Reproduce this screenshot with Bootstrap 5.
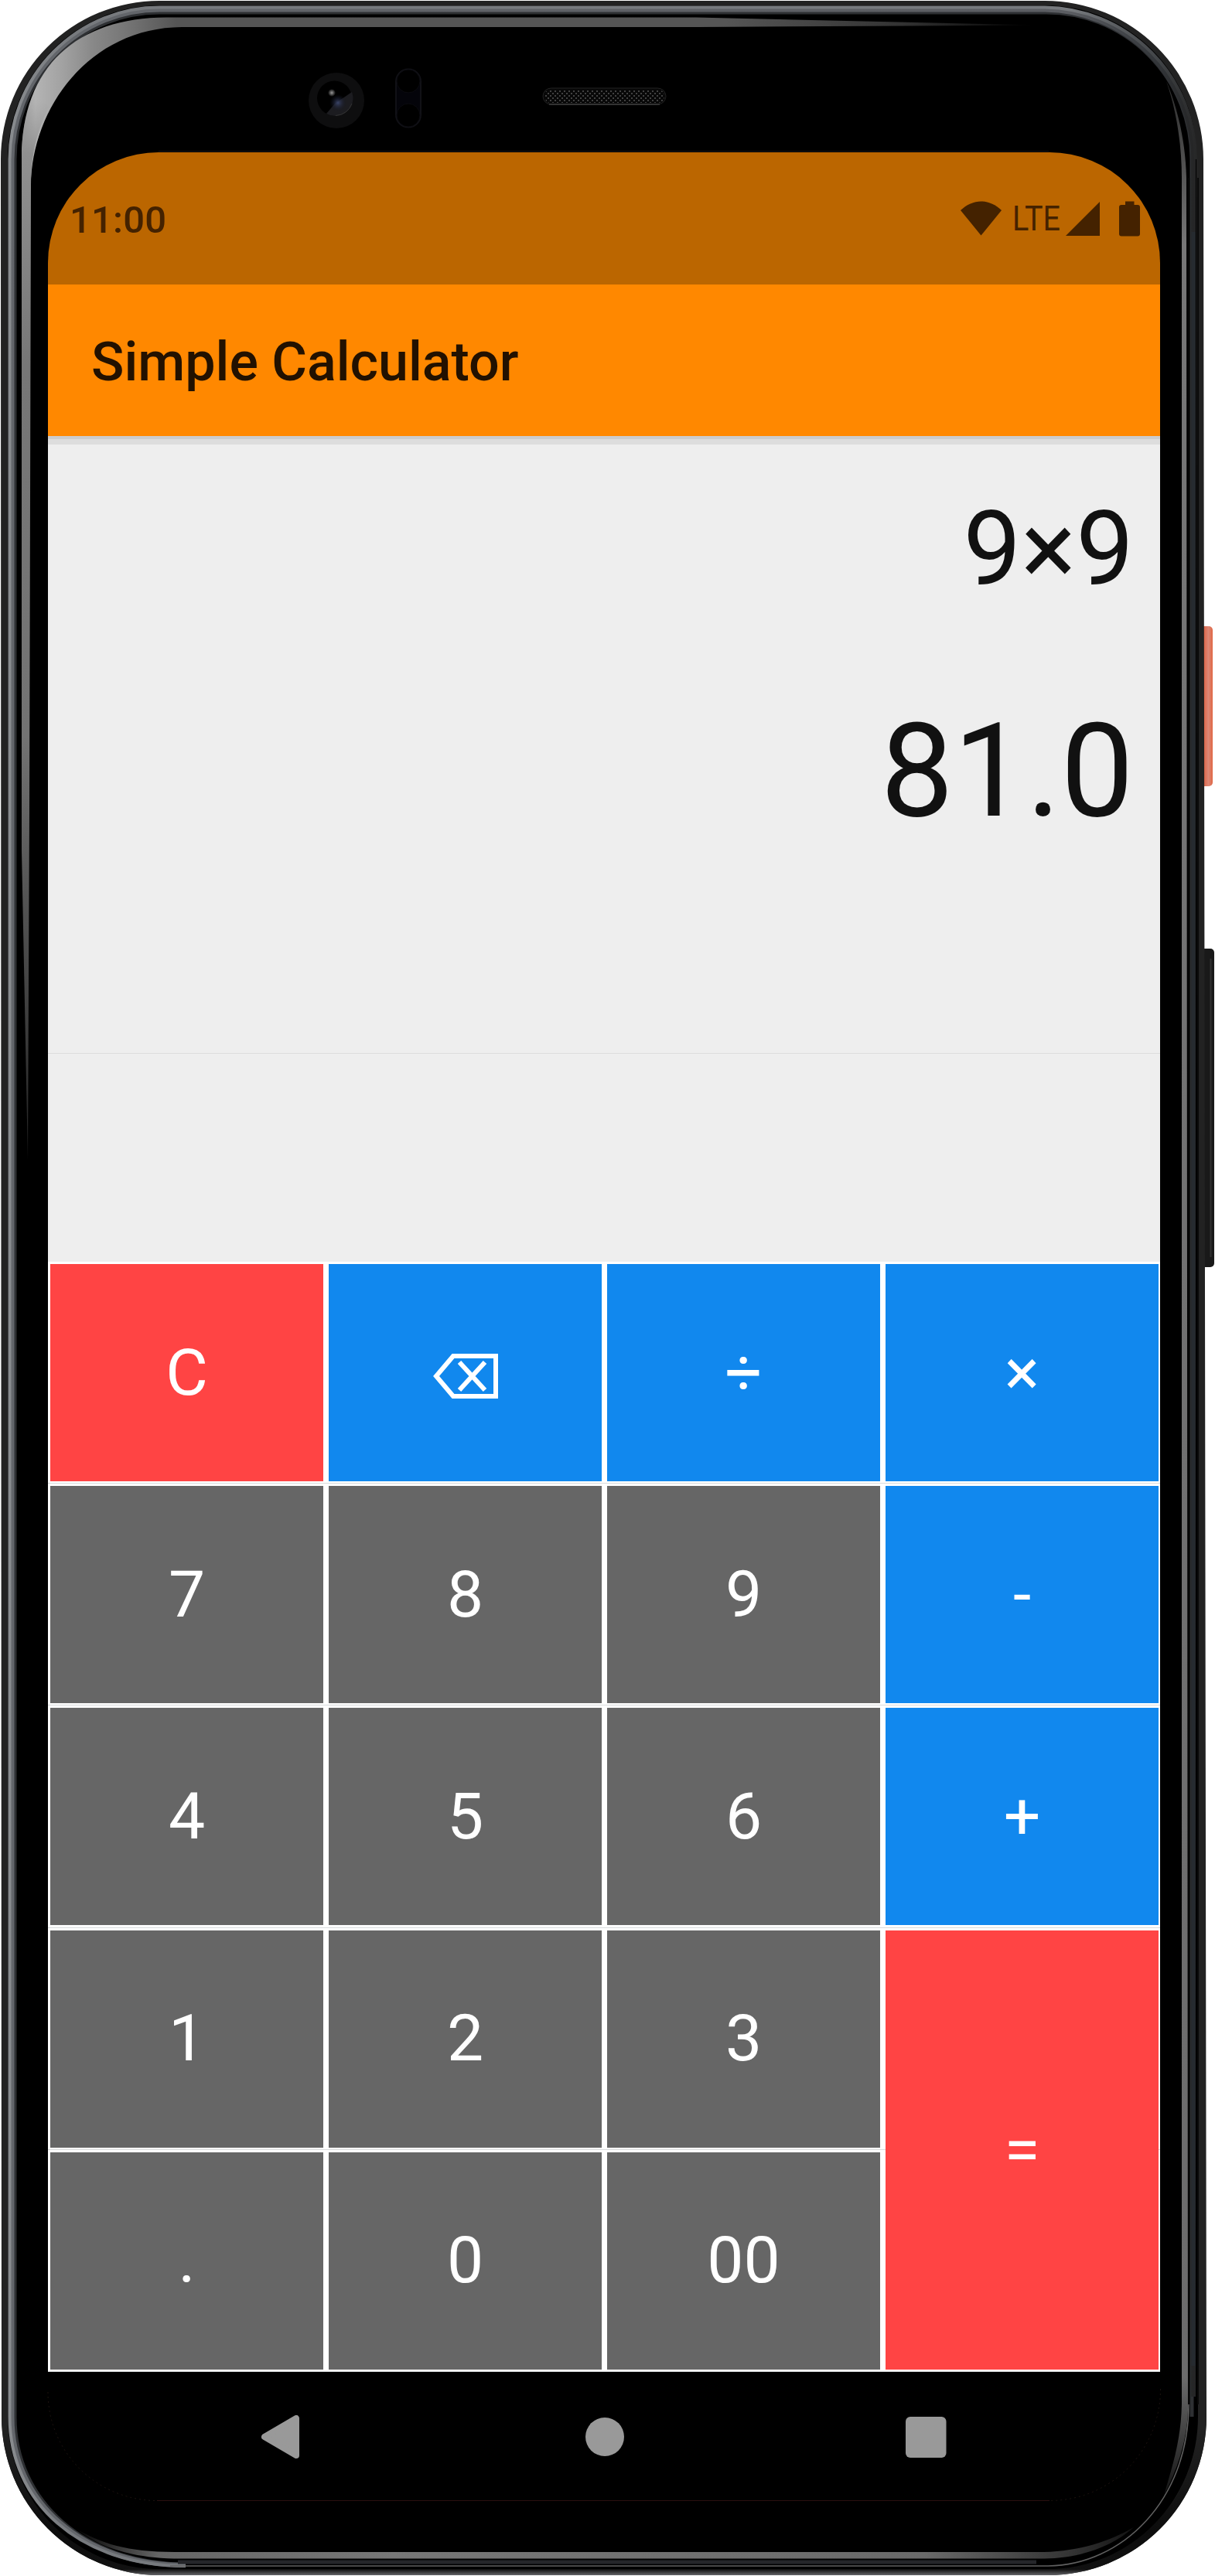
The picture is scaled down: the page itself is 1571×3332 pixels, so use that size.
<!DOCTYPE html>
<html lang="en">
<head>
<meta charset="utf-8">
<meta name="viewport" content="width=device-width, initial-scale=1">
<title>Simple Calculator</title>
<link href="https://cdn.jsdelivr.net/npm/bootstrap@5.3.0/dist/css/bootstrap.min.css" rel="stylesheet">
<style>
  body { font-family: Roboto, "Noto Sans", sans-serif; background: #fff; }
  .phone { width: 1571px; height: 3332px; padding: 197px 71px 0 62px; }
  .phone-body { width: 1571px; height: 3332px; }
  .screen { width: 1438px; height: 3039px; border-radius: 143px 143px 0 0; }
  .status-bar { height: 171px; background: #bb6600; color: #442200; padding: 0 25px 0 28px; }
  .clock { font-size: 49px; font-weight: 500; line-height: 57px; letter-spacing: .2px; padding-top: 3px; }
  .app-bar { height: 196px; background: #ff8800; padding: 3px 0 0 56px; z-index: 1;
    box-shadow: 0 4px 0 #ccc, 0 11px 0 #ddd; }
  .app-title { font-size: 70px; font-weight: 500; color: #221100; line-height: 82px; }
  .display { height: 1068px; background: #eee; color: #111; }
  .history { height: 799px; padding: 69px 34px 0 0; border-bottom: 1px solid #ddd; }
  .expression { font-size: 133px; line-height: 156px; }
  .result { font-size: 168px; line-height: 197px; margin-top: 110px; }
  .keypad { width: 1440px; height: 1436px; padding: 3px; gap: 6.2px 7px;
    grid-template-columns: repeat(4, 353px); grid-template-rows: repeat(5, 281px);
    background: repeating-linear-gradient(#fff 0 286.2px, #d8dbdc 286.2px 287.2px); }
  .key { font-size: 84px; line-height: 98px; color: #fff; background: #666; }
  .key-red { background: #ff4444; }
  .key-blue { background: #1188ee; }
  .key-tall { grid-row: span 2; }
  .nav-keys { height: 168px; padding: 0 276.5px 0 276px; }
</style>
<script src="https://cdn.jsdelivr.net/npm/bootstrap@5.3.0/dist/js/bootstrap.bundle.min.js"></script>
</head>
<body>
<main class="phone position-relative overflow-hidden">
  <svg class="phone-body position-absolute top-0 start-0" viewBox="0 0 1571 3332" fill="none" aria-hidden="true">
    <defs>
      <linearGradient id="rimA" gradientUnits="userSpaceOnUse" x1="0" y1="0" x2="1571" y2="0">
        <stop offset="0" stop-color="#8b8e91"/><stop offset=".06" stop-color="#777a7e"/><stop offset=".88" stop-color="#777a7e"/><stop offset=".95" stop-color="#44474a"/><stop offset=".99" stop-color="#222"/>
      </linearGradient>
      <linearGradient id="rimB" gradientUnits="userSpaceOnUse" x1="0" y1="0" x2="1571" y2="0">
        <stop offset="0" stop-color="#63666b"/><stop offset=".88" stop-color="#5b5d62"/><stop offset=".95" stop-color="#34373b"/><stop offset=".99" stop-color="#222"/>
      </linearGradient>
      <linearGradient id="glow" gradientUnits="userSpaceOnUse" x1="0" y1="0" x2="1340" y2="0">
        <stop offset=".02" stop-color="#999"/><stop offset=".034" stop-color="#b4b4b4"/><stop offset=".06" stop-color="#a2a2a2"/><stop offset=".09" stop-color="#888"/><stop offset=".12" stop-color="#777"/><stop offset=".17" stop-color="#555"/><stop offset=".7" stop-color="#555"/><stop offset=".87" stop-color="#333"/><stop offset="1" stop-color="#000"/>
      </linearGradient>
      <linearGradient id="glowLeft" gradientUnits="userSpaceOnUse" x1="0" y1="130" x2="0" y2="1500">
        <stop offset="0" stop-color="#999" stop-opacity="0"/><stop offset=".05" stop-color="#909090"/><stop offset=".25" stop-color="#777"/><stop offset=".6" stop-color="#737373"/><stop offset="1" stop-color="#222"/>
      </linearGradient>
      <linearGradient id="edge" gradientUnits="userSpaceOnUse" x1="0" y1="3140" x2="0" y2="3331">
        <stop offset="0" stop-color="#222"/><stop offset=".7" stop-color="#0c0c0c"/><stop offset=".96" stop-color="#111"/><stop offset="1" stop-color="#66666a"/>
      </linearGradient>
      <linearGradient id="stripe" gradientUnits="userSpaceOnUse" x1="0" y1="130" x2="0" y2="3230">
        <stop offset="0" stop-color="#333"/><stop offset=".06" stop-color="#777"/><stop offset=".95" stop-color="#6c6c6c"/><stop offset="1" stop-color="#111"/>
      </linearGradient>
      <linearGradient id="chin" gradientUnits="userSpaceOnUse" x1="95" y1="0" x2="1470" y2="0">
        <stop offset="0" stop-color="#000"/><stop offset=".08" stop-color="#666"/><stop offset=".3" stop-color="#777"/><stop offset=".8" stop-color="#6a6a6a"/><stop offset=".94" stop-color="#333"/><stop offset="1" stop-color="#111"/>
      </linearGradient>
      <linearGradient id="power" x1="0" x2="1"><stop offset="0" stop-color="#dd5533"/><stop offset=".3" stop-color="#dd5f3f"/><stop offset=".7" stop-color="#dd8877"/><stop offset="1" stop-color="#e06644"/></linearGradient>
      <radialGradient id="spark"><stop offset="0" stop-color="#999"/><stop offset="1" stop-color="#000"/></radialGradient>
      <radialGradient id="flare"><stop offset="0" stop-color="#3a4468"/><stop offset="1" stop-color="#111422" stop-opacity="0"/></radialGradient>
      <pattern id="mesh" width="6" height="6" patternUnits="userSpaceOnUse"><path d="M0 1h2M3 4h2" stroke="#555" stroke-width="1.6"/></pattern>
    </defs>
    <!-- side buttons -->
    <rect x="1550" y="810" width="18" height="207" rx="5" fill="url(#power)"/>
    <rect x="1550" y="1227" width="20" height="412" rx="5" fill="#191919"/>
    <path d="M1565.500 1240V1626" stroke="#303030" stroke-width="2"/>
    <!-- shell -->
    <path d="M206 1H1351A205 205 0 0 1 1556 206L1560 3126A205 205 0 0 1 1355 3331H206A205 205 0 0 1 2 3126L1 206A205 205 0 0 1 206 1Z" fill="#222"/>
    <path d="M1560 3126A205 205 0 0 1 1355 3331H206A205 205 0 0 1 2 3126H14A200 193 0 0 0 206 3322H1355A194 194 0 0 0 1549 3126Z" fill="url(#edge)"/>
    <path d="M206 7H1351A196 196 0 0 1 1547 206L1549 3126A194 197 0 0 1 1355 3323H206A196 197 0 0 1 10 3126V206A196 199 0 0 1 206 7Z" fill="#000"/>
    <!-- metal rim, light to dark towards the glass -->
    <path d="M240 3317C110 3317 19 3235 19 3126V206A187 190 0 0 1 206 16H1351A188 190 0 0 1 1541 206V3126" stroke="#2e3033" stroke-width="5"/>
    <path d="M240 3318C106 3318 15 3235 15.500 3126V206A190.500 194 0 0 1 206 12.500H1351A194 194 0 0 1 1543 206V3100" stroke="url(#rimB)" stroke-width="6"/>
    <path d="M240 3319C102 3319 12.500 3236 12.500 3126V206A193.500 197 0 0 1 206 9.500H1351A197 197 0 0 1 1546 206" stroke="url(#rimA)" stroke-width="4"/>
    <path d="M220 3319H1355C1450 3318 1537 3235 1537 3110" stroke="#606060" stroke-width="1.5"/>
    <path d="M230 3314H1340" stroke="#25262a" stroke-width="5"/>
    <path d="M1537.500 230V3110M1549 230V3110" stroke="#090909" stroke-width="2"/>
    <path d="M1543 300V3060" stroke="#262b30" stroke-width="5"/>
    <!-- reflections on the glass edge -->
    <path d="M28 205C28 85 100 23 215 22.500H900L1340 32.500L1171 33.500L900 35H235C115 36 41 140 40 240Z" fill="url(#glow)"/>
    <path d="M28 1100V205C28 173 33 145 43 118L63 138C48 170 40 200 40 240L38 1050L36 1500Z" fill="url(#glowLeft)"/>
    <path d="M1508 105C1522 145 1528 190 1528 230V3110C1527 3160 1514 3195 1505 3228C1524 3190 1535 3155 1536 3117L1534 230C1533 185 1523 140 1508 105Z" fill="url(#stripe)"/>
    <path d="M97 3270C130 3290 165 3301 225 3301H1350C1395 3300 1435 3287 1466 3269C1437 3295 1395 3309 1350 3309.500H225C165 3308 125 3293 97 3270Z" fill="url(#chin)"/>
    <!-- lower edge of the panel -->
    <path d="M203 3234.500H1357" stroke="#2a1010"/>
    <path d="M62 3094A141 140 0 0 0 203 3234.500M1500.500 3090A143 144 0 0 1 1357 3234.500" stroke="#1d1410" stroke-dasharray="2 4"/>
    <path d="M205 195.500H1356" stroke="#16161a"/>
    <!-- front camera -->
    <circle cx="435" cy="130" r="36" fill="#0e0e0f"/>
    <circle cx="432.500" cy="127" r="22.500" fill="#000"/>
    <path d="M455 119A23 23 0 0 1 422 147L433 134Z" fill="#1c1c20"/>
    <circle cx="437" cy="133" r="11" fill="url(#flare)"/>
    <circle cx="429" cy="120" r="5" fill="url(#spark)"/>
    <path d="M455 134A23 23 0 0 1 434 149.500" stroke="#333"/>
    <!-- proximity sensors -->
    <rect x="512" y="89.500" width="32" height="75" rx="16" fill="#04040a" stroke="#111116" stroke-width="2"/>
    <circle cx="528" cy="105" r="15" fill="#000" stroke="#0b0b10"/><circle cx="528" cy="149" r="15" fill="#000" stroke="#0b0b10"/>
    <!-- earpiece -->
    <rect x="702" y="114" width="159" height="21" rx="10.500" fill="#080808" stroke="#222"/>
    <rect x="704" y="116" width="155" height="17" rx="8" fill="url(#mesh)"/>
    <path d="M710 135H853" stroke="#555"/>
  </svg>

  <div class="screen position-relative d-flex flex-column overflow-hidden">
    <div class="status-bar d-flex align-items-center justify-content-between">
      <span class="clock">11:00</span>
      <svg width="234" height="60" viewBox="1241 252 234 60" fill="#442200" aria-label="Wi-Fi, LTE, battery full">
        <path d="M1242 271C1258 255.500 1279 255.500 1295 271L1268.500 303.500Z"/>
        <text x="1309" y="297" font-size="43.500" textLength="62" lengthAdjust="spacingAndGlyphs">LTE</text>
        <path d="M1422 260V304H1378Z"/>
        <path d="M1455 259.500H1466.500V264H1471Q1474 264 1474 267V301.500Q1474 304.500 1471 304.500H1450Q1447 304.500 1447 301.500V267Q1447 264 1450 264H1455Z"/>
      </svg>
    </div>
    <header class="app-bar d-flex align-items-center position-relative">
      <h1 class="app-title m-0">Simple Calculator</h1>
    </header>
    <section class="display">
      <div class="history d-flex flex-column align-items-end">
        <div class="expression">9×9</div>
        <div class="result">81.0</div>
      </div>
    </section>
    <section class="keypad d-grid flex-shrink-0">
      <button class="key key-red btn rounded-0 border-0 p-0">C</button>
      <button class="key key-blue btn rounded-0 border-0 p-0 d-flex align-items-center justify-content-center pt-2" aria-label="Backspace">
        <svg width="84" height="58" viewBox="0 0 84 58" fill="none" stroke="#fff" stroke-width="6"><path d="M26 3H81V55H26L4 29Z"/><path d="M34 11L67 47M67 11L34 47" stroke-width="6"/></svg>
      </button>
      <button class="key key-blue btn rounded-0 border-0 p-0">÷</button>
      <button class="key key-blue btn rounded-0 border-0 p-0">×</button>
      <button class="key btn rounded-0 border-0 p-0">7</button>
      <button class="key btn rounded-0 border-0 p-0">8</button>
      <button class="key btn rounded-0 border-0 p-0">9</button>
      <button class="key key-blue btn rounded-0 border-0 p-0">-</button>
      <button class="key btn rounded-0 border-0 p-0">4</button>
      <button class="key btn rounded-0 border-0 p-0">5</button>
      <button class="key btn rounded-0 border-0 p-0">6</button>
      <button class="key key-blue btn rounded-0 border-0 p-0">+</button>
      <button class="key btn rounded-0 border-0 p-0">1</button>
      <button class="key btn rounded-0 border-0 p-0">2</button>
      <button class="key btn rounded-0 border-0 p-0">3</button>
      <button class="key key-red key-tall btn rounded-0 border-0 p-0">=</button>
      <button class="key btn rounded-0 border-0 p-0">.</button>
      <button class="key btn rounded-0 border-0 p-0">0</button>
      <button class="key btn rounded-0 border-0 p-0">00</button>
    </section>
    <nav class="nav-keys d-flex align-items-center justify-content-between flex-shrink-0" aria-label="System navigation">
      <svg width="54" height="56" viewBox="0 0 54 56" fill="#999" stroke="#999" stroke-width="8" stroke-linejoin="round"><path d="M45 4V52L4 28Z"/></svg>
      <svg width="50" height="50" viewBox="0 0 50 50" fill="#999"><circle cx="25" cy="25" r="25"/></svg>
      <svg width="52.500" height="53" viewBox="0 0 52.500 53" fill="#999"><rect width="52.500" height="53" rx="6"/></svg>
    </nav>
  </div>
</main>
</body>
</html>
